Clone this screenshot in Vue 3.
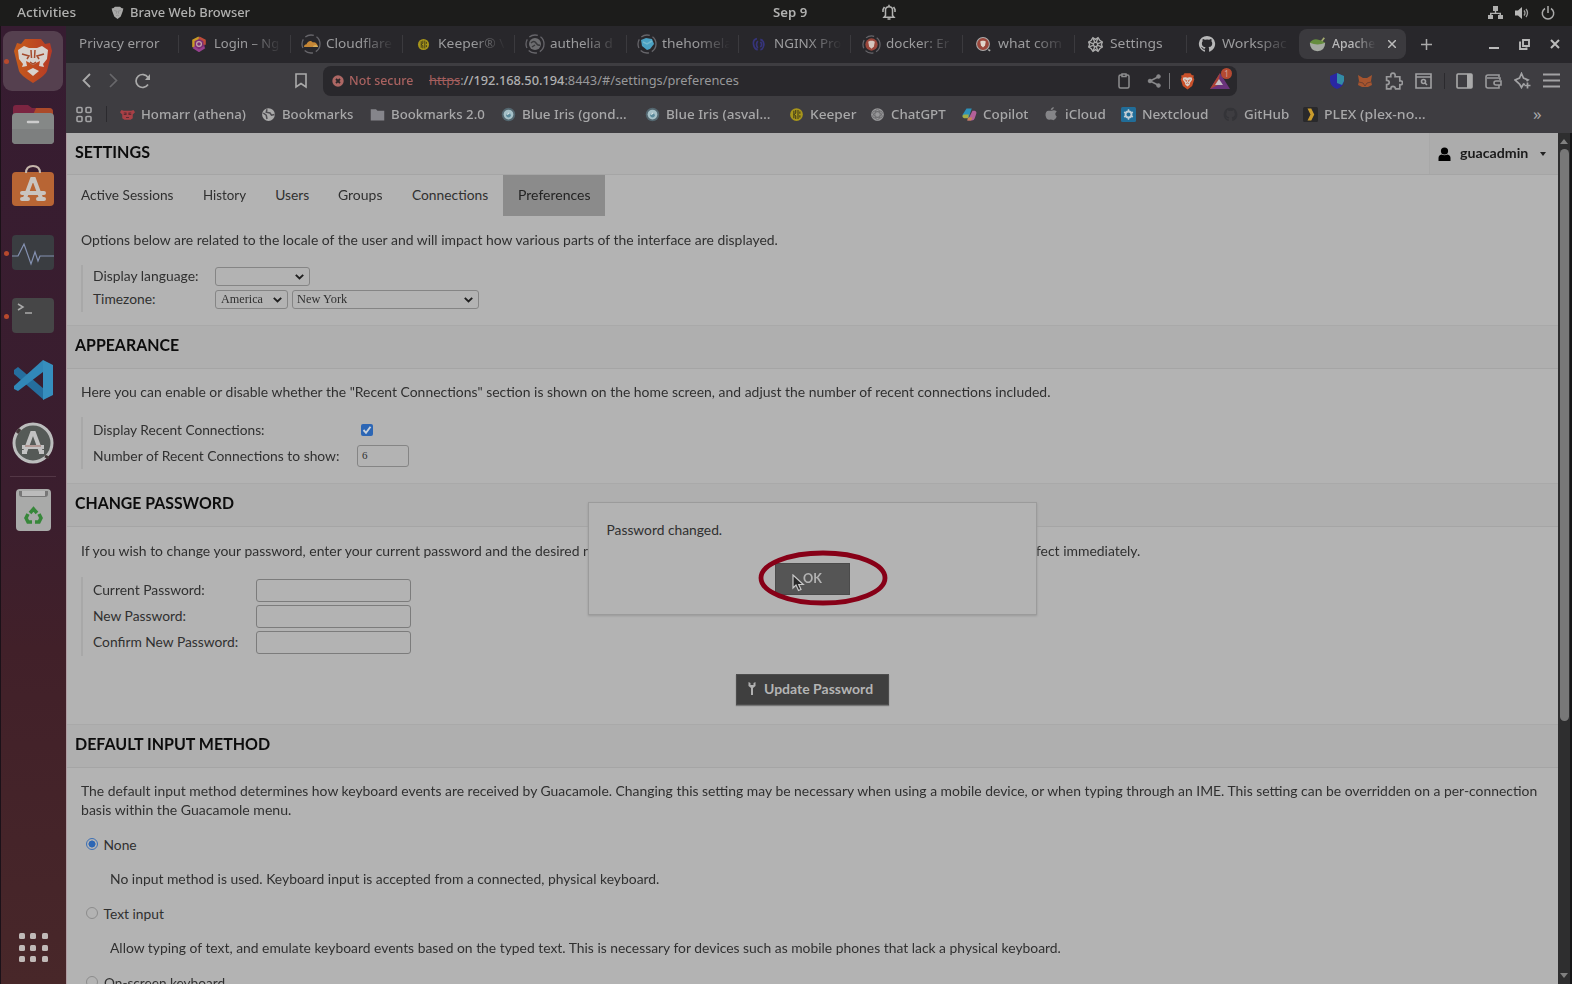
<script setup>
// Squeezes or stretches a line of text to a given width in pixels.
const vFit = {
  mounted(el, { value }) {
    if (!value) return
    const natural = el.offsetWidth
    el.style.transform = `scaleX(${value / natural})`
    el.style.marginRight = `${value - natural}px`
  }
}

const lion = '<path d="M10 1 13.500 1 15 3 17.500 3.500 17 6 18 8 15.500 16 10 20 4.500 16 2 8 3 6 2.500 3.500 5 3 6.500 1Z" fill="#c9502a"/><path d="M5 6 8 5.500 10 6.200 12 5.500 15 6 15.500 8.500 13 12 12.500 14.500 10 16.500 7.500 14.500 7 12 4.500 8.500Z" fill="#d6cfcb"/><path d="M6.500 8.500 9 9.500 8.500 11M13.500 8.500 11 9.500 11.500 11M8.500 13 10 12.200 11.500 13" stroke="#c9502a" fill="none"/>'
const ring = '<circle cx="10" cy="10" r="9" fill="none" stroke="#66656a" stroke-width="1.300" stroke-dasharray="9 3"/>'
const octo = 'M10 1a9 9 0 0 0-3 17.500c.5.1.7-.2.7-.5v-1.700c-2.500.5-3-1.200-3-1.200-.4-1-1-1.300-1-1.300-.8-.6.1-.6.1-.6.9.1 1.400 1 1.400 1 .8 1.400 2.100 1 2.600.7.1-.6.3-1 .6-1.200-2-.2-4.100-1-4.100-4.400 0-1 .3-1.800.9-2.400-.1-.2-.4-1.100.1-2.400 0 0 .8-.2 2.500.9a9 9 0 0 1 4.500 0c1.700-1.100 2.500-.9 2.500-.9.5 1.300.2 2.200.1 2.400.6.6.9 1.400.9 2.400 0 3.500-2.100 4.200-4.100 4.400.3.3.6.8.6 1.700V18c0 .3.2.6.7.5A9 9 0 0 0 10 1Z'
const icons = {
  login: '<path d="M10 2 17 5.500 17 14 10 18.500 3 14 3 5.500Z" fill="#7b2d73"/><path d="M10 2 3 5.500 3 14" stroke="#c99a28" stroke-width="3" fill="none"/><path d="M3 14 10 18.500 17 14" stroke="#96418e" stroke-width="3" fill="none"/><path d="M10 2 17 5.500V11" stroke="#bd4b3a" stroke-width="3" fill="none"/><circle cx="10" cy="10" r="3" fill="none" stroke="#c4a8ac" stroke-width="1.500"/>',
  cloud: ring + '<path d="M3 13c0-2 1-2.500 2.500-2.700C6.500 7 10 5.500 12 8.500c2-.8 4.500 1.300 5 4.500Z" fill="#c68736"/><path d="M12 13c0-2 4-3 5 0Z" fill="#d5ae5d"/>',
  keeper: '<circle cx="10" cy="10" r="8.500" fill="#a7951b"/><path d="M6.500 5v10M9 4v4l-2 2 2 2v4M12 4v12M14.500 6v3M14.500 11v3" stroke="#353219" stroke-width="1.300" fill="none"/>',
  authelia: ring + '<circle cx="10" cy="10" r="6" fill="#6d6d70"/><path d="M6 9q3-3 5 0t4 2M7 13l3-2" stroke="#38383b" stroke-width="1.500" fill="none"/>',
  lab: ring + '<path d="M4 6 9 4l6 1 2 5-4 5-3 1-5-4Z" fill="#4ba1c3"/><path d="m6 8 4 2 5-3" stroke="#72b8cd" fill="none" stroke-width="1.500"/>',
  nginx: '<path d="M7 3Q2 4 3 10t5 6M8 6Q5 10 8 14M11 4q5 2 4 7t-4 5M11 7q3 3 0 6" stroke="#36347b" stroke-width="2" fill="none"/>',
  docker: ring + '<circle cx="10" cy="10" r="6.500" fill="#9a463b"/><path d="m6.500 7 2-1h3l2 1-1 5-2.500 2.500L7.500 12Z" fill="#d5c5bd"/>',
  brave: '<circle cx="10" cy="10" r="8" fill="#9a463b" stroke="#aaa" stroke-width="1.300"/><path d="m6.500 7 2-1h3l2 1-1 5-2.500 2.500L7.500 12Z" fill="#e1d5cc"/><path d="m16.500 17 2.500 1.500" stroke="#aaa" stroke-width="2"/>',
  gear: '<g fill="none" stroke="#aaa" stroke-width="1.600"><circle cx="10" cy="10" r="2.500"/><path d="m7 2 3 2 3-2 2 3 3 2-1 3 1 3-3 2-2 3-3-2-3 2-2-3-3-2 1-3-1-3 3-2Z"/><path d="m7 2 2 5M13 2l-2 5M18 7l-5 2M18 13l-5-2M7 18l2-5M13 18l-2-5M2 7l5 2M2 13l5-2"/></g>',
  github: `<path fill="#b7b7b8" d="${octo}"/>`,
  darkhub: `<path fill="#343438" d="${octo}"/>`,
  guac: '<path d="M1 8h18q0 9-9 10Q1 17 1 8Z" fill="#a5aaa2"/><path d="M1 8Q4 3 10 4t9 4q-9 4-18 0Z" fill="#658d3e"/><path d="m15 6 3-4" stroke="#a2aa70" stroke-width="2"/>',
  homarr: '<path d="M2 4 0 7l3 3v5l3 2h8l3-2v-5l3-3-2-3-3 1H5Z" fill="#a94046"/><path d="M5 8h3v2H5M15 8h-3v2h3M8 14h4" stroke="#5b2b33" fill="none" stroke-width="1.500"/>',
  globe: '<circle cx="10" cy="10" r="8.500" fill="#aaa"/><path d="m3 8 4 3 1 5M8 3l-1 4 5 1 2 3 4-1" stroke="#4e4d51" fill="none" stroke-width="2"/>',
  folder: '<path d="M1 3h7l2 2h9v13H1Z" fill="#85858b"/>',
  iris: '<circle cx="10" cy="10" r="9" fill="#53666f"/><circle cx="10" cy="10" r="6.500" fill="#a6c1c8"/><circle cx="10" cy="11" r="3" fill="#5b8a9b"/><path d="m8 10 3-2" stroke="#d3e0e2" stroke-width="2"/>',
  gpt: '<circle cx="10" cy="10" r="8.500" fill="#98989a"/><g fill="none" stroke="#6b6b6d" stroke-width="1.100"><ellipse cx="10" cy="10" rx="3.500" ry="7"/><ellipse cx="10" cy="10" rx="3.500" ry="7" transform="rotate(60 10 10)"/><ellipse cx="10" cy="10" rx="3.500" ry="7" transform="rotate(120 10 10)"/></g>',
  copilot: '<path d="M6 2h7l-4 12H3Q0 14 1 10Z" fill="#2d91b8"/><path d="M3 10h6l-1 5H3Q0 14 1 11Z" fill="#a4ad45"/><path d="M14 5h3q3 1 2 4l-2 6q-1 3-4 3H7l3-5Z" fill="#b46098"/><path d="M8 14h6l-2 4H7Z" fill="#c88455"/>',
  apple: '<path d="M10 5q4-2 7 1-4 3 0 7-3 6-6 4-2-1-4 0Q3 17 2 11 2 4 7 5Z" fill="#858588"/><path d="M9 4q0-3 4-4 0 4-4 4" fill="#858588"/>',
  nextcloud: '<rect width="20" height="20" rx="2" fill="#216d98"/><circle cx="10" cy="10" r="4" fill="none" stroke="#c0cdd5" stroke-width="2.500"/><path d="M10 3v3M10 14v3M4 7l3 1M13 12l3 1M4 13l3-1M13 8l3-1" stroke="#c0cdd5" stroke-width="2"/>',
  plex: '<rect width="20" height="20" rx="2" fill="#29292b"/><path d="M6 2h5l4 8-4 8H6l4-8Z" fill="#c99b2c"/>',
  lion
}

const tabs = [
  { t: 'Login – Ng', i: 'login', w: 65, s: 16 },
  { t: 'Cloudflare', i: 'cloud', w: 66, s: 20 },
  { t: 'Keeper® \\', i: 'keeper', w: 66, s: 13 },
  { t: 'authelia d', i: 'authelia', w: 63, s: 20 },
  { t: 'thehomela', i: 'lab', w: 70, s: 20 },
  { t: 'NGINX Pro', i: 'nginx', w: 67, s: 17 },
  { t: 'docker: Er', i: 'docker', w: 63, s: 19 },
  { t: 'what com', i: 'brave', w: 64, s: 16 },
  { t: 'Settings', i: 'gear', w: 53, s: 17, solid: true },
  { t: 'Workspac', i: 'github', w: 65, s: 18 }
]
const marks = [
  { t: 'Homarr (athena)', i: 'homarr', w: 105, c: 141 },
  { t: 'Bookmarks', i: 'globe', w: 71, c: 109 },
  { t: 'Bookmarks 2.0', i: 'folder', w: 94, c: 131 },
  { t: 'Blue Iris (gond…', i: 'iris', w: 105, c: 144 },
  { t: 'Blue Iris (asval…', i: 'iris', w: 104.5, c: 144 },
  { t: 'Keeper', i: 'keeper', w: 46, c: 81 },
  { t: 'ChatGPT', i: 'gpt', w: 55, c: 92 },
  { t: 'Copilot', i: 'copilot', w: 46, c: 82 },
  { t: 'iCloud', i: 'apple', w: 41, c: 77 },
  { t: 'Nextcloud', i: 'nextcloud', w: 66, c: 102 },
  { t: 'GitHub', i: 'darkhub', w: 45, c: 80 },
  { t: 'PLEX (plex-no…', i: 'plex', w: 102, c: 120 }
]
const nav = [
  { t: 'Active Sessions', w: 92 },
  { t: 'History', w: 43.5 },
  { t: 'Users', w: 34 },
  { t: 'Groups', w: 44.5 },
  { t: 'Connections', w: 76 },
  { t: 'Preferences', w: 72, on: true }
]
const passwords = [
  { t: 'Current Password:', w: 111.5 },
  { t: 'New Password:', w: 93 },
  { t: 'Confirm New Password:', w: 145 }
]
</script>

<template>
  <div class="desktop">
    <header class="topbar">
      <span class="activities"><span v-fit="59" class="fit">Activities</span></span>
      <svg class="tb-brave" width="13" height="15" viewBox="0 0 20 20"><path d="M6 1h8l2 2 3 1-1 4-3 8-5 4-5-4-3-8-1-4 3-1Z" fill="#a9a9a8"/><path d="m5 7 4 1-1 4M15 7l-4 1 1 4M8 15l2-1 2 1" stroke="#8c8c8c" fill="none" stroke-width="1.300"/></svg>
      <span class="appname"><span v-fit="120" class="fit">Brave Web Browser</span></span>
      <span class="date"><span v-fit="34" class="fit">Sep 9</span></span>
      <svg class="bell" width="14" height="17" viewBox="0 0 14 17" fill="none" stroke="#b4b4b3" stroke-width="1.500"><path d="M3.500 11.500V6q0-3.200 3.500-3.200T10.500 6v5.500l1.500 1.800H2ZM5.500 15h3M7 .8v2M1 8V5.500L2.500 3M13 8V5.500L11.500 3"/></svg>
      <svg class="net" width="15" height="14" viewBox="0 0 15 14" fill="#b0b0af"><path d="M5 0h5v5H8.200v1.800H13V9h2v4h-5V9h1.500V8h-8v1H5v4H0V9h2V6.800h4.800V5H5Z"/></svg>
      <svg class="vol" width="15" height="14" viewBox="0 0 15 14"><path d="M0 4.500h3L7 1v12L3 9.500H0Z" fill="#b8b8b7"/><path d="M9 4.500q2 2.500 0 5M11 3q3 4 0 8" stroke="#a0a09f" fill="none" stroke-width="1.300"/></svg>
      <svg class="pow" width="14" height="14" viewBox="0 0 14 14" fill="none" stroke="#aaa" stroke-width="1.500"><path d="M4 2.500a5.700 5.700 0 1 0 6 0M7 0v7"/></svg>
    </header>

    <div class="body">
      <aside class="dock">
        <div class="tile lion"><i class="dot"></i><svg width="40" height="46" viewBox="0 0 40 46"><defs><linearGradient id="lg"><stop stop-color="#c65c1b"/><stop offset="1" stop-color="#b63a26"/></linearGradient></defs><path d="M12 1h16l4 5 5-1 2 8-5 20q-1 4-14 12Q7 37 6 33L1 13l3-8 4 1Z" fill="url(#lg)"/><path d="M5 12 11 8l5 2h8l5-2 6 4-1 9-4 5 1 3-5-1 1-5-4 2h-6l-4-2 1 5-5 1 1-3-4-5Z" fill="#d8d2ce"/><path d="M16 17h8l-1 8-3 2-3-2Z" fill="#d8d2ce"/><path d="m9 16 7 2-2 3M31 16l-7 2 2 3M17 24l3 2 3-2M18 12l.5 8M22 12l-.5 8" stroke="#a44a2d" stroke-width="1.500" fill="none"/><path d="m14 33 6-3 6 3-6 5Z" fill="#d8d2ce"/></svg></div>
        <svg class="files" width="42" height="39" viewBox="0 0 42 39"><path d="M1 12V3q0-3 3-3h12l4 3h17q4 0 4 4v8Z" fill="#7b2541"/><path d="M24 3h13q4 0 4 4v5H20Z" fill="#ab4a2a"/><rect y="8" width="42" height="31" rx="4" fill="#858887"/><path d="M0 24h42v11q0 4-4 4H4q-4 0-4-4Z" fill="#7d7f7f"/><path d="M16 17h10" stroke="#ccc" stroke-width="2.500" stroke-linecap="round"/></svg>
        <svg class="software" width="42" height="41" viewBox="0 0 42 41"><rect y="7" width="42" height="34" rx="4" fill="#b86534"/><path d="M14 8q0-7 7-7t7 7" stroke="#c5b5aa" stroke-width="2" fill="none"/><path d="m13 33 7-19h2l7 19M10 28h22M10 34h6M26 34h6" stroke="#c9c4bf" stroke-width="4" stroke-linecap="round" fill="none"/></svg>
        <div class="row monitor"><i class="dot"></i><svg width="42" height="35" viewBox="0 0 42 35"><rect width="42" height="35" rx="4" fill="#3a3d41"/><path d="M0 21h6l6-12 7 20 4-12 3 9 2-5h14" stroke="#8491b1" stroke-width="1.200" fill="none"/></svg></div>
        <div class="row terminal"><i class="dot"></i><svg width="42" height="35" viewBox="0 0 42 35"><rect width="42" height="35" rx="4" fill="#464647"/><path d="m6 6 5 3-5 3M13 15h7" stroke="#aaa" stroke-width="1.500" fill="none"/></svg></div>
        <svg class="vscode" width="41" height="40" viewBox="0 0 41 40"><path d="m1 10 4-3 26 22v11L1 14Z" fill="#256e9e"/><path d="m1 26 29-26v12L5 31l-4-2Z" fill="#3188b8"/><path d="m30 0 10 5v30l-10 5Z" fill="#368fbe"/></svg>
        <svg class="updater" width="42" height="42" viewBox="0 0 42 42"><circle cx="21" cy="21" r="19" fill="#555a57" stroke="#bcbdbd" stroke-width="3"/><path d="m13 30 7-19h2l7 19M10 25h22M10 30h5M27 30h5" stroke="#c2c2c2" stroke-width="4" fill="none"/><path d="M13 24h16" stroke="#a98983" stroke-width="1.500"/><path d="M5 11 8 7M33 34l4 2" stroke="#423737" stroke-width="3"/></svg>
        <hr>
        <svg class="trash" width="35" height="42" viewBox="0 0 35 42"><rect width="35" height="42" rx="4" fill="#a9aaa9"/><path d="M3 2h29v3q0 3-3 3H6Q3 8 3 5Z" fill="#777"/><path d="M6 2h23v5H6Z" fill="#bbb"/><g fill="none" stroke="#37873a" stroke-width="3.500"><path d="m14 24 3.500-4 3.500 4"/><path d="m23 25 2 4-2 4h-4"/><path d="M12 25 10 29l2 4h4"/></g></svg>
        <div class="apps"><i v-for="n in 9" :key="n"></i></div>
      </aside>

      <main class="browser">
        <div class="tabstrip">
          <div class="tab first"><span v-fit="81" class="fit">Privacy error</span></div>
          <div v-for="t in tabs" :key="t.t" class="tab">
            <span class="tabicon"><svg :width="t.s" :height="t.s" viewBox="0 0 20 20" v-html="icons[t.i]"></svg></span>
            <span class="tabtext" :class="{ solid: t.solid }"><span v-fit="t.w" class="fit">{{ t.t }}</span></span>
          </div>
          <div class="tab active">
            <svg width="17" height="17" viewBox="0 0 20 20" v-html="icons.guac"></svg>
            <span class="tabtext"><span v-fit="43" class="fit">Apache</span></span>
            <svg width="8" height="8" viewBox="0 0 8 8" stroke="#bbb" stroke-width="1.500"><path d="m0 0 8 8M8 0 0 8"/></svg>
          </div>
          <svg class="plus" width="11" height="11" viewBox="0 0 11 11" stroke="#aaa" stroke-width="1.500"><path d="M0 5.500h11M5.500 0v11"/></svg>
          <div class="winctl">
            <svg width="10" height="10" viewBox="0 0 10 10" stroke="#bbb" stroke-width="2"><path d="M0 9h10"/></svg>
            <svg width="11" height="11" viewBox="0 0 11 11" fill="none" stroke="#b7b7b7" stroke-width="1.900"><path d="M4 1h6v6H4ZM2 3.500H1V10h6.500V8.500"/></svg>
            <svg width="10" height="10" viewBox="0 0 10 10" stroke="#bbb" stroke-width="2"><path d="m1 1 8 8M9 1 1 9"/></svg>
          </div>
        </div>

        <div class="toolbar">
          <svg class="back" width="9" height="15" viewBox="0 0 9 15" fill="none" stroke="#aaa" stroke-width="1.800"><path d="M8 1 1.500 7.500 8 14"/></svg>
          <svg class="fwd" width="9" height="15" viewBox="0 0 9 15" fill="none" stroke="#68686b" stroke-width="1.700"><path d="m1 1 6.500 6.500L1 14"/></svg>
          <svg class="reload" width="17" height="16" viewBox="0 0 17 16" fill="none" stroke="#aaa" stroke-width="1.700"><path d="M14 11.500A6.500 6.500 0 1 1 14 4.500"/><path d="m16 1v6h-5Z" fill="#aaa" stroke="none"/></svg>
          <svg class="mark" width="12" height="16" viewBox="0 0 12 16" fill="none" stroke="#aaa" stroke-width="1.600"><path d="M1 1h10v13l-5-3.500L1 14Z"/></svg>
          <div class="urlbar">
            <svg class="warn" width="12" height="12" viewBox="0 0 12 12"><circle cx="6" cy="6" r="5.700" fill="#ad6764"/><path d="m4 4 4 4M8 4 4 8" stroke="#2b2729" stroke-width="1.800"/></svg>
            <span class="notsec"><span v-fit="64" class="fit">Not secure</span></span>
            <span class="url"><span v-fit="310" class="fit"><s>https</s>:<b>//192.168.50.194</b>:8443/#/settings/preferences</span></span>
            <svg class="clip" width="12" height="16" viewBox="0 0 12 16" fill="none" stroke="#8d8d8f" stroke-width="1.500"><path d="M3.500 2H2.500Q1 2 1 3.500v10Q1 15 2.500 15h7q1.500 0 1.500-1.500v-10Q11 2 9.500 2h-1M4 1h4v2.500H4Z"/></svg>
            <svg class="share" width="14" height="14" viewBox="0 0 14 14" fill="#88888a" stroke="#88888a"><path d="m3 7 8-4M3 7l8 4" stroke-width="1.500"/><circle cx="3" cy="7" r="1.800"/><circle cx="11.500" cy="2.500" r="1.800"/><circle cx="11.500" cy="11.500" r="1.800"/></svg>
            <i class="bar"></i>
            <svg class="shield" width="17" height="18" viewBox="0 0 20 20" v-html="icons.lion"></svg>
            <span class="bat"><svg width="20" height="16" viewBox="0 0 20 16"><path d="M10 0 0 16h20Z" fill="#6a347c"/><path d="M10 0 0 16l8-4Z" fill="#ac4334"/><path d="m9 6-4 6h8Z" fill="#c6c0c4"/></svg><em>1</em></span>
          </div>
          <div class="exts">
            <svg width="16" height="18" viewBox="0 0 16 18"><path d="M8 1 15 4v5q-1 6-7 8Q2 15 1 9V4Z" fill="#2a27a3"/><path d="M8 1 15 4v5l-2 4-5-2Z" fill="#338ca5"/></svg>
            <svg width="16" height="16" viewBox="0 0 16 16"><path d="m1 2 5 3h4l5-3-1 6 1 4-4 2H5l-4-2 1-4Z" fill="#a6552f"/><path d="m2 9 4 1 2 3 2-3 4-1" stroke="#6e4030" fill="none"/></svg>
            <svg width="18" height="18" viewBox="0 0 17 17" fill="none" stroke="#9a9a9c" stroke-width="1.600"><path d="M1.500 4.500h4Q5 1 7.500 1t2 3.500h4.500v4q2.500-.5 2.500 1.700t-2.500 1.800v4h-4q-.5-2.500-2.500-2.500T5.500 16h-4v-4q2.500 0 2.500-2T1.500 8Z"/></svg>
            <svg width="17" height="16" viewBox="0 0 17 16" fill="none" stroke="#a0a0a2" stroke-width="1.600"><path d="M1 1h15v14H1ZM1 4h15"/><circle cx="8.500" cy="8.500" r="2"/><path d="m10 10 2 2"/></svg>
            <i class="sep"></i>
            <svg width="17" height="16" viewBox="0 0 17 16"><rect x="1" y="1" width="15" height="14" rx="1" fill="none" stroke="#aaa" stroke-width="1.600"/><path d="M11 1h5v14h-5Z" fill="#aaa"/></svg>
            <svg width="17" height="16" viewBox="0 0 17 16" fill="none" stroke="#9b9b9d" stroke-width="1.600"><path d="M14 4V2H3Q1 2 1 4v9q0 2 2 2h11v-3M2 5h13v2M16 8h-5q-2 0-2 2t2 2h5Z"/></svg>
            <svg width="17" height="17" viewBox="0 0 17 17" fill="none" stroke="#a2a2a4" stroke-width="1.700"><path d="M11 12.500 9.500 12l-2 3.500-2-3.500L1 8l4.500-2 2-4.500 2 4.500L14 8l-1.500 1M13.500 10.500v6M10.500 13.500h6"/></svg>
            <svg width="17" height="15" viewBox="0 0 17 15" stroke="#a2a2a4" stroke-width="2"><path d="M0 1.500h17M0 7.500h17M0 13.500h17"/></svg>
          </div>
        </div>

        <div class="bookmarks">
          <svg class="grid" width="16" height="17" viewBox="0 0 16 16" fill="none" stroke="#a2a2a4" stroke-width="1.600"><rect x="1" y="1" width="5" height="5" rx="1"/><rect x="10" y="1" width="5" height="5" rx="1"/><rect x="1" y="10" width="5" height="5" rx="1"/><rect x="10" y="10" width="5" height="5" rx="1"/></svg>
          <i class="sep"></i>
          <div v-for="m in marks" :key="m.t" class="bm" :style="{ width: m.c + 'px' }">
            <svg width="15" height="15" viewBox="0 0 20 20" v-html="icons[m.i]"></svg>
            <span v-fit="m.w" class="fit">{{ m.t }}</span>
          </div>
          <span class="more">»</span>
        </div>

        <div class="viewport">
          <div class="page">
            <div class="head top">
              <h2><span v-fit="75" class="fit">SETTINGS</span></h2>
              <div class="user">
                <svg width="13" height="14" viewBox="0 0 13 14"><circle cx="6.500" cy="4" r="3.600"/><path d="M.5 14v-3q0-3 3-3.500 3 1.500 6 0 3 .5 3 3.500v3Z"/></svg>
                <span class="uname"><span v-fit="68" class="fit">guacadmin</span></span>
                <i class="caret"></i>
              </div>
            </div>
            <nav><a v-for="n in nav" :key="n.t" :class="{ on: n.on }"><span v-fit="n.w" class="fit">{{ n.t }}</span></a></nav>

            <section class="locale">
              <p><span v-fit="697" class="fit">Options below are related to the locale of the user and will impact how various parts of the interface are displayed.</span></p>
              <div class="fields">
                <div class="f"><label><span v-fit="105.500" class="fit">Display language:</span></label><span class="select lang"><svg width="9" height="6" viewBox="0 0 9 6"><path d="m.8.8 3.700 3.700L8.200.8"/></svg></span></div>
                <div class="f"><label><span v-fit="62" class="fit">Timezone:</span></label><span class="select region"><span v-fit="42" class="fit">America</span><svg width="9" height="6" viewBox="0 0 9 6"><path d="m.8.8 3.700 3.700L8.200.8"/></svg></span><span class="select city"><span v-fit="50.500" class="fit">New York</span><svg width="9" height="6" viewBox="0 0 9 6"><path d="m.8.8 3.700 3.700L8.200.8"/></svg></span></div>
              </div>
            </section>

            <div class="head"><h2><span v-fit="104.500" class="fit">APPEARANCE</span></h2></div>
            <section class="appearance">
              <p><span v-fit="969.500" class="fit">Here you can enable or disable whether the "Recent Connections" section is shown on the home screen, and adjust the number of recent connections included.</span></p>
              <div class="fields">
                <div class="f"><label><span v-fit="172" class="fit">Display Recent Connections:</span></label><span class="check"><svg width="12" height="12" viewBox="0 0 12 12"><path d="m2.500 6 2.500 2.800 4.500-6" fill="none" stroke="#c9d2dc" stroke-width="1.900"/></svg></span></div>
                <div class="f"><label><span v-fit="246" class="fit">Number of Recent Connections to show:</span></label><span class="num">6</span></div>
              </div>
            </section>

            <div class="head"><h2><span v-fit="159.500" class="fit">CHANGE PASSWORD</span></h2></div>
            <section class="password">
              <p><span v-fit="1059.500" class="fit">If you wish to change your password, enter your current password and the desired new password below, and click "Update Password". The change will take effect immediately.</span></p>
              <div class="fields">
                <div v-for="p in passwords" :key="p.t" class="f"><label><span v-fit="p.w" class="fit">{{ p.t }}</span></label><span class="input"></span></div>
              </div>
              <div class="update"><svg width="8" height="13" viewBox="0 0 8 13"><path d="M.5 0v4L3 6v7h2V6l2.500-2V0L5.500 1v2h-3V1Z" fill="#b0b0b0"/></svg><span v-fit="109" class="fit">Update Password</span></div>
            </section>

            <div class="head"><h2><span v-fit="195.500" class="fit">DEFAULT INPUT METHOD</span></h2></div>
            <section class="input-method">
              <p class="two"><span v-fit="1456" class="fit">The default input method determines how keyboard events are received by Guacamole. Changing this setting may be necessary when using a mobile device, or when typing through an IME. This setting can be overridden on a per-connection</span><br><span v-fit="210" class="fit">basis within the Guacamole menu.</span></p>
              <div class="opt"><i class="radio sel"></i><span v-fit="33" class="fit">None</span></div>
              <div class="desc"><span v-fit="549.500" class="fit">No input method is used. Keyboard input is accepted from a connected, physical keyboard.</span></div>
              <div class="opt"><i class="radio"></i><span v-fit="60" class="fit">Text input</span></div>
              <div class="desc"><span v-fit="951" class="fit">Allow typing of text, and emulate keyboard events based on the typed text. This is necessary for devices such as mobile phones that lack a physical keyboard.</span></div>
              <div class="opt"><i class="radio"></i><span v-fit="121.500" class="fit">On-screen keyboard</span></div>
            </section>
          </div>
          <div class="scroll"><i class="up"></i><i class="thumb"></i><i class="down"></i></div>
        </div>
      </main>
    </div>

    <div class="dialog">
      <p><span v-fit="116" class="fit">Password changed.</span></p>
      <div class="ok"><span v-fit="19" class="fit">OK</span></div>
    </div>
    <svg class="ellipse" width="132" height="58" viewBox="0 0 132 58"><ellipse cx="66" cy="29" rx="62" ry="25" fill="none" stroke="#870017" stroke-width="4.800"/></svg>
    <svg class="cursor" width="13" height="18" viewBox="0 0 13 18"><path d="M1 1v13l3-3 2.500 5.500 2.500-1-2.300-5h4.600Z" fill="#292929" stroke="#c8c8c8" stroke-width="1.200"/></svg>
  </div>
</template>

<style>
html, body { margin: 0; overflow: hidden; background: #111; }
</style>

<style scoped>
* { box-sizing: border-box; }
svg { display: block; flex: none; }
.desktop { position: relative; width: 1572px; height: 984px; overflow: hidden; display: flex; flex-direction: column; background: #151416; font-family: "Noto Sans", "Open Sans", sans-serif; font-size: 12.8px; color: #a8a8a9; }
.fit { display: inline-block; white-space: nowrap; transform-origin: 0 50%; flex: none; }
.topbar { height: 26px; flex: none; display: flex; align-items: center; background: #1c1c1b; color: #b1b1b0; font-weight: 500; line-height: 25px; padding: 0 0 1px 17px; }
.activities { width: 94px; }
.tb-brave { margin-right: 6px; }
.appname { width: 643px; }
.date { width: 109px; font-weight: 600; }
.bell { margin-right: 592px; }
.net { margin-right: 12px; }
.vol { margin-right: 11px; }
.body { flex: 1; display: flex; min-height: 0; }
.dock { width: 66px; flex: none; display: flex; flex-direction: column; align-items: center; border-left: 1px solid #1b1118; background: linear-gradient(#361c31, #3b1e2e 50%, #412029 65%, #482729); padding: 5px 1px 0 0; }
.dock > * { flex: none; }
.tile { position: relative; width: 60px; height: 60px; border-radius: 9px; background: #55404f; display: flex; align-items: center; justify-content: center; margin-bottom: 14px; }
.dot { position: absolute; left: 1px; top: 50%; width: 5px; height: 5px; margin-top: -2px; border-radius: 50%; background: #b7492d; }
.software { margin-top: 21px; }
.row { position: relative; width: 62px; display: flex; justify-content: center; }
.row .dot { left: 2px; }
.monitor { margin-top: 29px; }
.terminal { margin-top: 28px; }
.vscode { margin-top: 27px; }
.updater { margin-top: 22px; }
.dock hr { width: 46px; height: 1px; border: 0; margin: 12px 0 12px; background: #533746; }
.apps { margin-top: 402px; display: grid; grid-template-columns: repeat(3, 6px); gap: 5.5px; }
.apps i { width: 6px; height: 6px; border-radius: 1.5px; background: #c0b9b7; }
.browser { flex: 1; min-width: 0; display: flex; flex-direction: column; background: #3e3d41; }
.tabstrip { height: 37px; flex: none; display: flex; align-items: center; background: #28272b; padding: 0 0 1px 0; color: #9c9c9e; }
.tab { width: 112px; flex: none; height: 18px; display: flex; align-items: center; border-right: 1px solid #3b3a3e; line-height: 18px; }
.tab.first { padding-left: 13px; width: 113px; }
.tabicon { width: 20px; margin: 0 5px 0 10px; display: flex; justify-content: center; }
.tabtext { width: 68px; overflow: hidden; position: relative; top: -1px; -webkit-mask-image: linear-gradient(90deg, #000 50%, transparent); mask-image: linear-gradient(90deg, #000 50%, transparent); }
.tab.first .fit { margin-top: -2px; }
.tabtext.solid { -webkit-mask-image: none; mask-image: none; }
.tab:nth-child(11) { border-color: transparent; }
.tab.active { height: 30px; width: 107px; margin-left: 0; padding-left: 10px; border: 0; border-radius: 8px; background: #3b3a3e; color: #b8b8b9; }
.tab.active .tabtext { width: 44px; margin: 0 12px 0 6px; font-weight: 500; }
.plus { margin-left: 15px; }
.winctl { margin-left: 57px; display: flex; align-items: center; gap: 20px; }
.toolbar { height: 37px; flex: none; display: flex; align-items: center; padding: 0 0 2px 16px; }
.fwd { margin-left: 18px; }
.reload { margin-left: 16px; }
.mark { margin-left: 144px; }
.urlbar { width: 914px; height: 30px; margin-left: 16px; border-radius: 8px; background: #29282c; display: flex; align-items: center; padding-left: 9px; line-height: 18px; }
.notsec { width: 80px; margin: -1px 0 0 5px; color: #a96260; font-weight: 500; }
.url { width: 689px; margin-top: -1px; color: #98989a; }
.url b { font-weight: 500; color: #b0b0b1; }
.url s { color: #a45e5d; }
.share { margin-left: 17px; }
.bar { width: 1px; height: 16px; margin-left: 8px; background: #77777a; }
.shield { margin-left: 9px; }
.bat { position: relative; margin-left: 14px; }
.bat em { position: absolute; left: 11px; top: -5px; width: 11px; height: 11px; border-radius: 50%; background: #b54a32; font: 8px/11px "Noto Sans", sans-serif; text-align: center; color: #d0a89d; }
.exts { margin-left: 92px; width: 231px; display: flex; align-items: center; justify-content: space-between; flex: none; }
.sep { width: 1px; height: 16px; background: #2b2a2e; }
.bookmarks { height: 33px; flex: none; display: flex; align-items: center; padding: 0 0 5px 10px; line-height: 18px; }
.bookmarks .sep { margin: 0 13px 0 14px; }
.bm { display: flex; align-items: center; gap: 5.5px; flex: none; font-weight: 500; }
.more { margin-left: 110px; font-size: 17px; }
.viewport { flex: 1; min-height: 0; display: flex; }
.page { width: 1492px; flex: none; overflow: hidden; background: #b3b3b3; color: #303030; font-family: Lato, "Noto Sans", sans-serif; font-size: 13.8px; line-height: 19px; border-left: 1px solid #ad9ba0; display: flex; flex-direction: column; }
.page > * { flex: none; }
.head { height: 44px; background: #afafaf; border-top: 1px solid #a9a9a9; border-bottom: 1px solid #a5a5a5; display: flex; padding-left: 8px; }
.head.top { height: 42px; border-top: 0; justify-content: space-between; }
h2 { margin: 0; font-size: 16.3px; line-height: 38px; font-weight: 700; color: #0c0c0c; }
.head.top h2 { line-height: 38px; }
.user { width: 129px; border-left: 1px solid #a8a8a8; background: #acacac; display: flex; align-items: center; padding-left: 8px; color: #1a1a1a; font-weight: 700; font-size: 14px; }
.uname { margin: -3px 12px 0 9px; }
.caret { border: 3.5px solid transparent; border-top: 4px solid #222; border-bottom: 0; }
nav { height: 41px; display: flex; margin-left: -1px; }
nav a { padding: 10px 14.6px 0; height: 41px; }
nav a:first-child { padding-right: 15.2px; }
nav a.on { margin-left: .6px; background: #8b8b8b; color: #232323; }
p { margin: 0; padding-left: 13.5px; white-space: nowrap; line-height: 19px; }
.locale { height: 109px; padding-top: 14px; }
.fields { margin-left: 14px; border-left: 2px solid #a8a8a8; padding-left: 10px; }
.f { display: flex; align-items: center; }
.f label { margin-top: -2px; }
.locale .fields { margin-top: 16px; height: 47px; }
.locale .f { height: 23px; }
.locale label { width: 122px; }
.select { height: 19px; border: 1px solid #858585; border-radius: 3px; display: flex; align-items: center; padding: 0 5px; justify-content: space-between; font: 12.5px "Liberation Serif", serif; }
.select svg { fill: none; stroke: #202020; stroke-width: 1.9; margin-left: auto; }
.lang { width: 95px; }
.region { width: 73px; margin-right: 4px; }
.city { width: 187px; padding-left: 4px; }
.appearance { height: 114px; padding-top: 13px; }
.appearance .fields { margin-top: 16px; height: 52px; }
.appearance .f { height: 26px; }
.appearance label { width: 264px; }
.check { width: 12px; height: 12px; margin-left: 4px; margin-top: -1px; border-radius: 2px; background: #2c66b5; }
.num { width: 52px; height: 22px; border: 1px solid #858585; border-radius: 3px; font: 11px/19px "Liberation Serif", serif; padding-left: 4px; }
.password { height: 197px; padding-top: 14px; }
.password .fields { margin-top: 17px; height: 79px; }
.password .f { height: 26px; }
.password label { width: 163px; }
.input { width: 155px; height: 23px; border: 1px solid #7c7c7c; border-radius: 3px; }
.update { width: 153px; height: 31px; margin: 18px auto 0 669px; background: #3f3f3f; border: 1px solid #4d4d4d; display: flex; align-items: center; padding: 0 0 3px 11px; gap: 8px; color: #b4b4b4; font-weight: 700; font-size: 14px; box-shadow: 0 1px 1px #777; }
.input-method { padding-top: 13px; }
.opt { height: 19px; margin: 16px 0 0 18.5px; display: flex; align-items: center; }
.radio { width: 12px; height: 12px; margin: -1px 6px 0 0; border: 1px solid #8c8c8c; border-radius: 50%; }
.radio.sel { border: 1.5px solid #3d70b5; background: radial-gradient(#2c66b5 0 3.2px, #b3b3b3 3.8px); }
.desc { height: 19px; margin: 15px 0 0 43px; white-space: nowrap; }
.scroll { flex: 1; background: #2e2e2f; border-right: 2px solid #151517; display: flex; flex-direction: column; align-items: center; padding: 6px 0; }
.up, .down { border: 4px solid transparent; border-bottom: 5px solid #818181; border-top: 0; }
.thumb { width: 9px; height: 572px; margin-top: 5px; border-radius: 5px; background: #787878; }
.down { border-bottom: 0; border-top: 5px solid #818181; margin-top: auto; }
.dialog { position: absolute; left: 588px; top: 502px; width: 449px; height: 113px; background: #b3b3b3; border: 1px solid #9b9b9b; box-shadow: 0 1px 2px #999; font-family: Lato, sans-serif; font-size: 13.8px; color: #303030; }
.dialog p { padding: 17px 0 0 17.5px; }
.ok { width: 75px; height: 32px; margin: 24px auto 0 186px; background: #555; display: flex; justify-content: center; align-items: center; padding-bottom: 3px; color: #b2b2b2; font-weight: 700; font-size: 14px; border: 1px solid #4b4b4b; }
.ellipse { position: absolute; left: 757px; top: 549px; }
.cursor { position: absolute; left: 792px; top: 574px; }
</style>
